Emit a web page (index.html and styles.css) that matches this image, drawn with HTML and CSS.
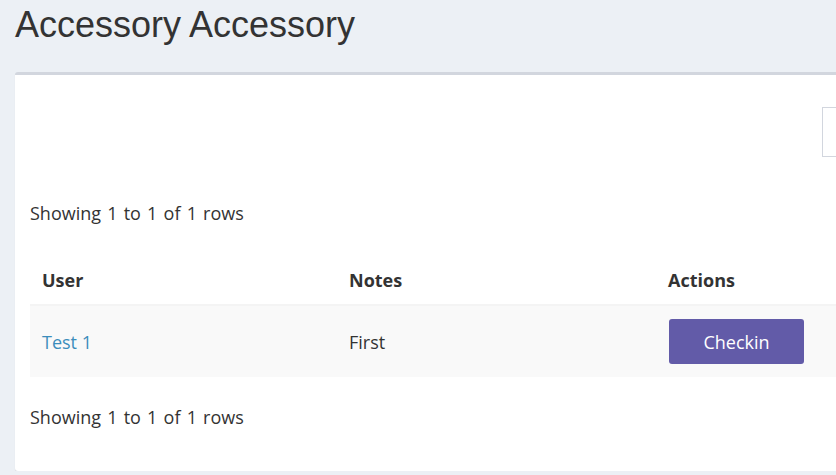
FILE: index.html
```html
<!DOCTYPE html>
<html>
<head>
<meta charset="utf-8">
<link rel="stylesheet" href="styles.css">
</head>
<body>
<div class="page">
  <h1 class="title">Accessory Accessory</h1>
  <div class="box">
    <div class="toolbar">
      <input class="search" type="text">
    </div>
    <div class="info">Showing 1 to 1 of 1 rows</div>
    <table class="tbl">
      <thead>
        <tr><th class="c1">User</th><th class="c2">Notes</th><th class="c3">Actions</th></tr>
      </thead>
      <tbody>
        <tr><td><a class="link" href="#">Test 1</a></td><td>First</td><td><button class="btn">Checkin</button></td></tr>
      </tbody>
    </table>
    <div class="info bottom">Showing 1 to 1 of 1 rows</div>
  </div>
</div>
</body>
</html>
```
FILE: styles.css
```css
html, body {
  margin: 0;
  padding: 0;
  background: #ecf0f5;
  overflow: hidden;
}
.page {
  width: 900px;
  padding: 0 0 0 15px;
}
.title {
  font-family: "Liberation Sans", Arial, sans-serif;
  font-weight: normal;
  font-size: 36px;
  line-height: 40px;
  color: #333;
  margin: 0;
  padding: 5px 0 0 0;
  height: 67px;
}
.box {
  background: #fff;
  border-top: 3px solid #d2d6de;
  border-radius: 3px;
  box-shadow: 0 1px 1px rgba(0,0,0,0.1);
  padding: 0 15px;
  height: 396px;
  font-family: "Open Sans", sans-serif;
  font-size: 18px;
  color: #333;
}
.toolbar {
  display: flex;
  justify-content: flex-end;
  padding-top: 32px;
  height: 50px;
}
.search {
  box-sizing: border-box;
  width: 100px;
  height: 50px;
  margin: 0;
  border: 1px solid #d2d6de;
  margin-right: -22px;
}
.info {
  margin-top: 44px;
  line-height: 24px;
  word-spacing: 1.5px;
}
.info.bottom {
  margin-top: 28px;
}
.tbl {
  border-collapse: collapse;
  margin-top: 31px;
  width: 900px;
  table-layout: fixed;
}
.c1 { width: 307px; }
.c2 { width: 319px; }
.tbl th, .tbl td {
  box-sizing: border-box;
}
.tbl th {
  text-align: left;
  font-weight: bold;
  padding: 12px 12px;
  line-height: 24px;
  border-bottom: 2px solid #f4f4f4;
}
.tbl td {
  background: #f9f9f9;
  padding: 13px 12px;
  line-height: 24px;
  vertical-align: middle;
}
.link {
  color: #3c8dbc;
  text-decoration: none;
}
.btn {
  font-family: "Open Sans", sans-serif;
  font-size: 18px;
  color: #fff;
  background: #625ba8;
  border: none;
  border-radius: 3px;
  width: 135px;
  height: 45px;
  padding: 0;
  margin-left: 1px;
}
```
